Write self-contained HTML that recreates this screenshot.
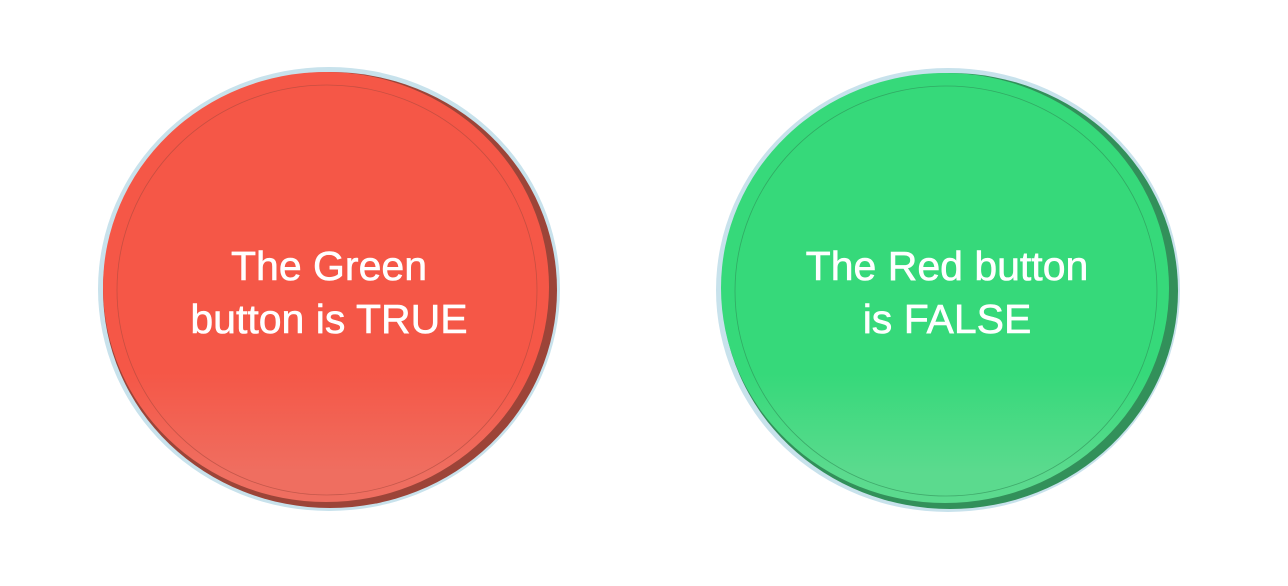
<!DOCTYPE html>
<html><head><style>
html,body{margin:0;padding:0;background:#fff;width:1288px;height:586px;overflow:hidden}
svg{display:block}
text{font-family:"Liberation Sans",sans-serif;font-size:41px;fill:#fff;stroke:#fff;stroke-width:0.6;text-anchor:middle}
</style></head><body>
<svg width="1288" height="586" viewBox="0 0 1288 586">
<defs>
<linearGradient id="rg" x1="0" y1="0" x2="0" y2="1">
<stop offset="0" stop-color="#F55747"/><stop offset="0.7" stop-color="#F55747"/><stop offset="0.93" stop-color="#EF6E60"/><stop offset="1" stop-color="#EF6E60"/>
</linearGradient>
<linearGradient id="gg" x1="0" y1="0" x2="0" y2="1">
<stop offset="0" stop-color="#36D97A"/><stop offset="0.7" stop-color="#36D97A"/><stop offset="0.93" stop-color="#5BDA8E"/><stop offset="1" stop-color="#5BDA8E"/>
</linearGradient>
</defs>
<!-- red -->
<ellipse cx="329" cy="289" rx="231" ry="222" fill="#C8E2EC"/>
<ellipse cx="330" cy="290" rx="227" ry="218" fill="#9C4438"/>
<ellipse cx="326" cy="287" rx="223" ry="215" fill="url(#rg)"/>
<ellipse cx="327" cy="290" rx="210" ry="205" fill="none" stroke="#A84A3E" stroke-width="0.8" opacity="0.6"/>
<text x="329" y="280">The Green</text>
<text x="329" y="333">button is TRUE</text>
<!-- green -->
<ellipse cx="948" cy="290" rx="232" ry="222" fill="#C8E2EC"/>
<ellipse cx="950" cy="291" rx="228" ry="218" fill="#32905A"/>
<ellipse cx="945" cy="288" rx="224" ry="215" fill="url(#gg)"/>
<ellipse cx="946" cy="291" rx="211" ry="205" fill="none" stroke="#2E8A55" stroke-width="0.8" opacity="0.6"/>
<text x="947" y="280">The Red button</text>
<text x="947" y="333">is FALSE</text>
</svg>
</body></html>
